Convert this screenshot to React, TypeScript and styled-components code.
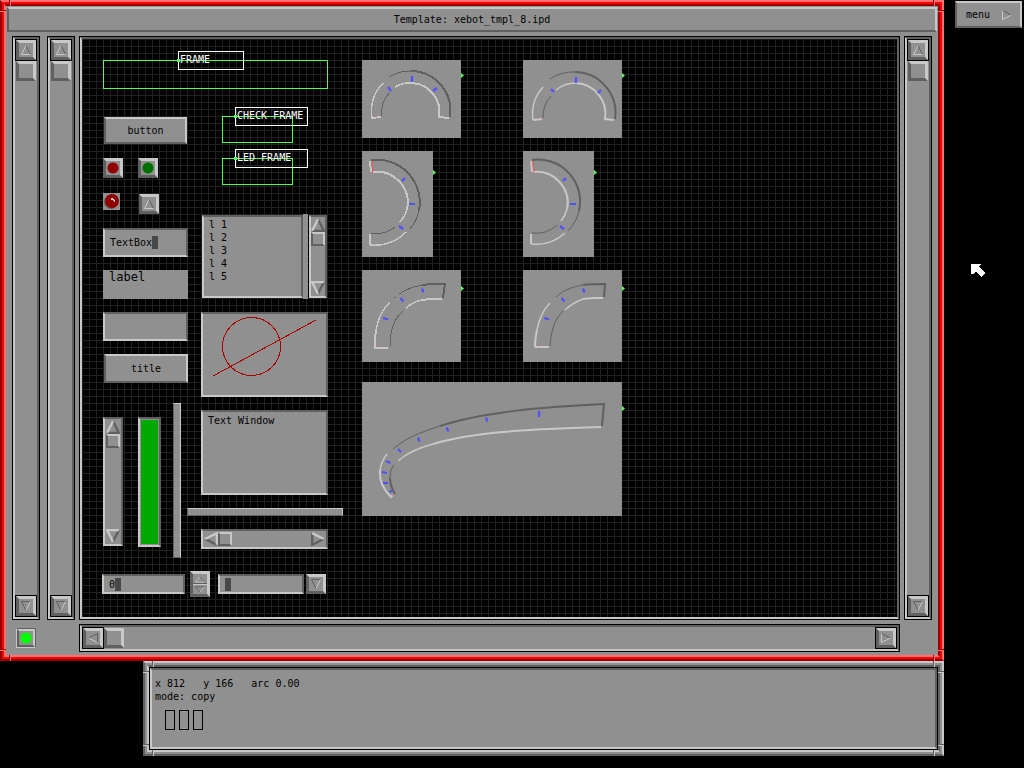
import React, { useState } from "react";
import styled, { createGlobalStyle, css } from "styled-components";

const C = {
  face: "#909090",
  light: "#c8c8c8",
  dark: "#606060",
  black: "#000000",
  green: "#55ff55",
  tick: "#5050ff",
};

const raised = css`
  border-style: solid;
  border-color: ${C.light} ${C.light} ${C.dark} ${C.dark};
`;
const sunken = css`
  border-style: solid;
  border-color: ${C.dark} ${C.dark} ${C.light} ${C.light};
`;

const Global = createGlobalStyle`
  *, *::before, *::after { box-sizing: border-box; }
  body { margin: 0; background: #000; }
  body, button, input, select, textarea {
    font: 10px/13px "DejaVu Sans Mono", "Liberation Mono", monospace;
    color: #000;
  }
`;

/* ---------- desktop and windows ---------- */

const Desktop = styled.main`
  position: relative;
  display: grid;
  grid-template-columns: 1fr 80px;
  min-height: 100vh;
  padding-bottom: 12px;
  background: #000;
`;

const Stack = styled.div`
  display: flex;
  flex-direction: column;
  min-width: 0;
`;

type Tone = { hi: string; mid: string; lo: string };
const RED: Tone = { hi: "#ff7070", mid: "#ff0000", lo: "#900000" };
const GREY: Tone = { hi: C.light, mid: C.face, lo: C.dark };

const Outer = styled.section<{ $tone: Tone; $grow?: boolean }>`
  position: relative;
  display: flex;
  flex: ${(p) => (p.$grow ? "1 0 auto" : "none")};
  margin-left: ${(p) => (p.$grow ? "0" : "143px")};
  border: 2px solid;
  border-color: ${(p) => `${p.$tone.hi} ${p.$tone.hi} ${p.$tone.lo} ${p.$tone.lo}`};
`;

const Middle = styled.div<{ $tone: Tone }>`
  display: flex;
  flex: 1;
  min-width: 0;
  border: 2px solid ${(p) => p.$tone.mid};
`;

const Inner = styled.div<{ $tone: Tone }>`
  display: flex;
  flex-direction: column;
  flex: 1;
  min-width: 0;
  border: 2px solid;
  border-color: ${(p) => `${p.$tone.lo} ${p.$tone.lo} ${p.$tone.hi} ${p.$tone.hi}`};
  background: ${C.face};
`;

const Joint = styled.i<{ $tone: Tone; $v: "top" | "bottom"; $h: "left" | "right" }>`
  position: absolute;
  ${(p) => p.$v}: -2px;
  ${(p) => p.$h}: -2px;
  width: 12px;
  height: 12px;
  pointer-events: none;
  &::before,
  &::after {
    content: "";
    position: absolute;
  }
  &::before {
    ${(p) => p.$v}: 0;
    ${(p) => p.$h}: 9px;
    width: 2px;
    height: 6px;
    background: linear-gradient(90deg, ${(p) => p.$tone.lo} 50%, ${(p) => p.$tone.hi} 50%);
  }
  &::after {
    ${(p) => p.$h}: 0;
    ${(p) => p.$v}: 10px;
    width: 6px;
    height: 2px;
    background: linear-gradient(${(p) => p.$tone.lo} 50%, ${(p) => p.$tone.hi} 50%);
  }
`;

function Window({ tone, grow, label, children }: { tone: Tone; grow?: boolean; label: string; children: React.ReactNode }) {
  return (
    <Outer $tone={tone} $grow={grow} aria-label={label}>
      <Middle $tone={tone}>
        <Inner $tone={tone}>{children}</Inner>
      </Middle>
      <Joint $tone={tone} $v="top" $h="left" />
      <Joint $tone={tone} $v="top" $h="right" />
      <Joint $tone={tone} $v="bottom" $h="left" />
      <Joint $tone={tone} $v="bottom" $h="right" />
    </Outer>
  );
}

const TitleBar = styled.h1`
  ${raised}
  border-width: 2px;
  margin: 1px 1px 0;
  height: 25px;
  font-size: 10px;
  font-weight: normal;
  line-height: 22px;
  text-align: center;
`;

const Editor = styled.div`
  display: grid;
  flex: 1;
  grid-template-columns: 31px 28px 1fr 28px;
  grid-template-rows: 1fr 28px;
  gap: 4px;
  padding: 4px 6px 3px;
`;

const Well = styled.div`
  display: flex;
  min-width: 0;
  border: 1px solid #000;
`;

const Canvas = styled.div`
  ${sunken}
  border-width: 2px;
  position: relative;
  flex: 1;
  min-height: 582px;
  overflow: hidden;
  background-color: #000;
  background-image: linear-gradient(#202020 1px, transparent 1px), linear-gradient(90deg, #202020 1px, transparent 1px);
  background-size: 7px 7px;
`;

/* ---------- arrows ---------- */

type Dir = "up" | "down" | "left" | "right";

const SHAPES: Record<Dir, [string, string]> = {
  up: ["M1 11 L6 1", "M6 1 L11 11 H1"],
  down: ["M11 1 H1 L6 11", "M6 11 L11 1"],
  left: ["M11 11 V1 L1 6", "M1 6 L11 11"],
  right: ["M1 1 L11 6", "M11 6 L1 11 V1"],
};
const ENGRAVED: Record<Dir, [string, string]> = {
  up: ["M6 1.5 L1.5 10.5 H10.5", "M6 1.5 L10.5 10.5"],
  down: ["M6 10.5 L10.5 1.5", "M10.5 1.5 H1.5 L6 10.5"],
  left: ["M1.5 6 L10.5 10.5", "M10.5 10.5 V1.5 L1.5 6"],
  right: ["M1.5 1.5 V10.5 L10.5 6", "M1.5 1.5 L10.5 6"],
};

const ArrowSvg = styled.svg`
  display: block;
  flex: none;
`;

function Arrow({ dir, w = 12, h = 12, engraved }: { dir: Dir; w?: number; h?: number; engraved?: boolean }) {
  const [hi, lo] = (engraved ? ENGRAVED : SHAPES)[dir];
  const sw = engraved ? 1 : 2;
  return (
    <ArrowSvg width={w} height={h} viewBox="0 0 12 12" preserveAspectRatio="none" fill="none" strokeWidth={sw} aria-hidden>
      <path d={lo} stroke={C.dark} />
      <path d={hi} stroke={C.light} />
    </ArrowSvg>
  );
}

/* ---------- controls ---------- */

const Push = styled.button<{ $edge?: number; $size?: number; $outlined?: boolean }>`
  ${raised}
  border-width: ${(p) => p.$edge ?? 3}px;
  display: flex;
  align-items: center;
  justify-content: center;
  flex: none;
  width: ${(p) => (p.$size ? `${p.$size}px` : "100%")};
  height: ${(p) => (p.$size ? `${p.$size}px` : "100%")};
  margin: ${(p) => (p.$outlined ? "1px" : "0")};
  padding: 0;
  background: ${C.face};
  outline: ${(p) => (p.$outlined ? "1px solid #000" : "none")};
`;

const Glyph = styled.button`
  display: block;
  flex: none;
  padding: 0;
  border: 0;
  background: none;
`;

const Track = styled.div<{ $row?: boolean }>`
  ${sunken}
  border-width: 2px;
  display: flex;
  flex: 1;
  flex-direction: ${(p) => (p.$row ? "row" : "column")};
  align-items: center;
  width: 100%;
  height: 100%;
  min-width: 0;
  background: ${C.face};
`;

const Spacer = styled.span`
  flex: 1;
`;

function EditorScroll({ row, label }: { row?: boolean; label: string }) {
  return (
    <Well>
      <Track $row={row} role="group" aria-label={label}>
        <Push $size={20} $outlined aria-label={row ? "Left" : "Up"}>
          <Arrow dir={row ? "left" : "up"} engraved />
        </Push>
        <Push $size={20} aria-label="Thumb" />
        <Spacer />
        <Push $size={20} $outlined aria-label={row ? "Right" : "Down"}>
          <Arrow dir={row ? "right" : "down"} engraved />
        </Push>
      </Track>
    </Well>
  );
}

const SmallTrack = styled(Track)`
  padding: ${(p) => (p.$row ? "0 1px" : "1px 0")};
`;

function SmallScroll({ row, label }: { row?: boolean; label: string }) {
  return (
    <SmallTrack $row={row} role="group" aria-label={label}>
      <Glyph aria-label={row ? "Left" : "Up"}>
        <Arrow dir={row ? "left" : "up"} w={14} h={14} />
      </Glyph>
      <Push $size={14} $edge={2} aria-label="Thumb" />
      <Spacer />
      <Glyph aria-label={row ? "Right" : "Down"}>
        <Arrow dir={row ? "right" : "down"} w={14} h={14} />
      </Glyph>
    </SmallTrack>
  );
}

const Lamp = styled.input<{ $color: string; $edge?: number }>`
  ${raised}
  appearance: none;
  display: block;
  width: 100%;
  height: 100%;
  margin: 0;
  border-width: ${(p) => p.$edge ?? 3}px;
  background: radial-gradient(circle at center, ${(p) => p.$color} 5px, ${C.face} 6px);
`;

const StatusLamp = styled.div`
  ${sunken}
  border-width: 1px;
  width: 20px;
  height: 20px;
  margin-left: 4px;
  align-self: center;
`;

/* Items that the user drops on the template canvas, in canvas coordinates. */
const Item = styled.div<{ $x: number; $y: number; $w: number; $h: number }>`
  position: absolute;
  left: ${(p) => p.$x}px;
  top: ${(p) => p.$y}px;
  width: ${(p) => p.$w}px;
  height: ${(p) => p.$h}px;
`;

const FrameBox = styled(Item)`
  border: 1px solid ${C.green};
`;

const FrameLabel = styled(Item)`
  border: 1px solid #fff;
  padding: 1px;
  color: #fff;
  white-space: nowrap;
  &::before {
    content: "";
    position: absolute;
    left: -2px;
    top: 7px;
    width: 3px;
    height: 3px;
    background: ${C.green};
  }
`;

const SunkItem = styled(Item)`
  ${sunken}
  border-width: 2px;
  background: ${C.face};
`;

const PlainLabel = styled(Item)`
  padding: 0 6px;
  background: ${C.face};
  font-size: 12px;
  line-height: 14px;
`;

const Bar = styled(Item)`
  ${raised}
  border-width: 1px;
  background: ${C.face};
`;

const Input = styled.input`
  display: block;
  width: 100%;
  height: 100%;
  padding: 0 5px;
  border: 0;
  outline: 0;
  background: transparent;
  caret-color: transparent;
`;

const Block = styled.span<{ $col: number }>`
  position: absolute;
  left: calc(5px + ${(p) => p.$col}ch);
  top: 0;
  bottom: 0;
  width: 6px;
  height: 13px;
  margin: auto 0;
  background: #484848;
`;

function Field({ x, y, w, h, initial, label, cursor }: { x: number; y: number; w: number; h: number; initial: string; label: string; cursor?: boolean }) {
  const [value, setValue] = useState(initial);
  return (
    <SunkItem $x={x} $y={y} $w={w} $h={h}>
      <Input aria-label={label} value={value} onChange={(e) => setValue(e.target.value)} />
      {cursor && <Block $col={value.length} />}
    </SunkItem>
  );
}

const List = styled.select`
  appearance: none;
  display: block;
  width: 100%;
  height: 100%;
  padding: 2px 5px;
  border: 0;
  outline: 0;
  background: transparent;
  overflow: hidden;
  option {
    height: 13px;
    min-height: 13px;
    padding: 0;
    line-height: 13px;
    color: #000;
  }
`;

const TextArea = styled.textarea`
  display: block;
  width: 100%;
  height: 100%;
  padding: 2px 5px;
  border: 0;
  outline: 0;
  resize: none;
  background: transparent;
`;

const Level = styled.div`
  height: 100%;
  border: 1px solid ${C.face};
  background: #00a800;
`;

const Spinner = styled(Item)`
  ${raised}
  border-width: 3px;
  display: flex;
  flex-direction: column;
  align-items: center;
  justify-content: space-around;
  background: linear-gradient(${C.face} 9px, ${C.dark} 9px, ${C.dark} 10px, ${C.light} 10px, ${C.light} 11px, ${C.face} 11px);
`;

/* ---------- dials ---------- */

type Dial = {
  x: number;
  y: number;
  w: number;
  h: number;
  handle: number;
  smooth?: boolean;
  dark: string;
  darkBold: string;
  light: string;
  lightBold: string;
  ticks: string;
  zero: string;
};

const QUARTER_TICKS = "M21 48 L26 49.5 M38.5 28 L41.5 31.5 M60 18.5 L61.5 22.5";

const DIALS: Dial[] = [
  {
    x: 280, y: 21, w: 99, h: 78, handle: 15,
    dark: "M27 17 A40 40 0 0 1 49 11 M20 56 A29 29 0 0 1 27 33",
    darkBold: "M49 11 A40 40 0 0 1 88 57",
    light: "M10 58 A40 40 0 0 1 21 23 M33 27 A29 29 0 0 1 50 23",
    lightBold: "M9 58 L19 57 M50 23 A29 29 0 0 1 77 57 L87 58",
    ticks: "M50 16 V22 M26 27 L29 31 M71 31 L75 28",
    zero: "M14 56 h1",
  },
  {
    x: 441, y: 21, w: 99, h: 78, handle: 15, smooth: true,
    dark: "M27 19 A41 41 0 0 1 52 12 M20 58 A31 31 0 0 1 28 36",
    darkBold: "M52 12 A41 41 0 0 1 92 59",
    light: "M10 60 A41 41 0 0 1 20 27 M33 30 A31 31 0 0 1 53 23",
    lightBold: "M10 60 L19 59 M53 23 A31 31 0 0 1 82 59 L91 60",
    ticks: "M53 17 V23 M28 29 L31 32 M75 33 L78 30",
    zero: "M15 58 h1",
  },
  {
    x: 280, y: 112, w: 71, h: 106, handle: 21,
    dark: "M57 60 A43 43 0 0 1 48 78 M9 82 A31 31 0 0 0 33 76",
    darkBold: "M9 9 A43 43 0 0 1 57 60",
    light: "M44 81 A43 43 0 0 1 8 94 M45 58 A31 31 0 0 1 38 71",
    lightBold: "M8 94 V83 M8 10 L9 21 M10 21 A31 31 0 0 1 45 58",
    ticks: "M40 30 L43 27 M47 53 H53 M37 75 L41 78",
    zero: "M10 10 V22",
  },
  {
    x: 441, y: 112, w: 71, h: 106, handle: 21, smooth: true,
    dark: "M56 60 A42 42 0 0 1 45 80 M9 82 A31 31 0 0 0 34 74",
    darkBold: "M9 9 A42 42 0 0 1 56 60",
    light: "M42 82 A43 43 0 0 1 8 93 M44 58 A31 31 0 0 1 38 70",
    lightBold: "M8 93 V83 M8 10 L9 21 M10 21 A31 31 0 0 1 44 58",
    ticks: "M40 30 L43 27 M47 53 H53 M37 75 L41 78",
    zero: "M10 10 L11 22",
  },
  {
    x: 280, y: 231, w: 99, h: 92, handle: 18,
    dark: "M32 28 L34 27 M37 24 C43 20 50 17 60 15 M28 76 C28 60 33 48 41 41",
    darkBold: "M60 15 C66 14 74 14 83 14 L81 28",
    light: "M14 60 C16 49 20 40 27 33 M44 38 C50 33 55 31 60 30",
    lightBold: "M13 78 C13 70 13 65 14 60 M12 78 H26 M80 29 H68 L60 30",
    ticks: QUARTER_TICKS,
    zero: "M15 76 h1",
  },
  {
    x: 441, y: 231, w: 99, h: 92, handle: 18, smooth: true,
    dark: "M33 27 C42 19 50 17 60 15 M27 76 C28 60 32 49 40 41",
    darkBold: "M60 15 C66 14 74 14 82 14 L81 27",
    light: "M14 60 C16 49 20 40 27 33 M42 40 C49 33 55 31 60 29",
    lightBold: "M12 77 C12 70 13 65 14 60 M12 77 H26 M80 28 H70 L60 29",
    ticks: QUARTER_TICKS,
    zero: "M15 76 h1",
  },
  {
    x: 280, y: 343, w: 260, h: 134, handle: 26, smooth: true,
    dark: "M31 67 C45 55 60 50 78 44 M28 96 C28 90 29 87 32 83",
    darkBold: "M78 44 C120 30 180 25 242 22 L240 44 M28 96 C28 102 30 107 33 112",
    light: "M25 72 C21 77 19 82 18 88 M36 79 C46 70 60 65 71 62",
    lightBold: "M18 88 C17 98 20 106 29 115 L31 113 M71 62 C110 50 170 47 239 45",
    ticks:
      "M177 29 V35 M124 35.5 L125.5 39.5 M84.5 45.5 L86.5 49.5 M56 55.5 L57.5 59.5 M36 67 L39 70 M24 79 L28.5 81 M20 90 L25 91 M21 101 H26 M27.5 110 L30 108.5",
    zero: "M30 113 h1",
  },
];

const DialPanel = styled(Item)`
  background: ${C.face};
`;

const Handle = styled(Item)`
  background: ${C.green};
  clip-path: polygon(0 0, 100% 50%, 0 100%);
`;

function DialView({ d }: { d: Dial }) {
  return (
    <>
      <DialPanel $x={d.x} $y={d.y} $w={d.w} $h={d.h}>
        <svg width={d.w} height={d.h} fill="none" display="block" shapeRendering={d.smooth ? "auto" : "crispEdges"} aria-hidden>
          <g stroke={C.dark}>
            <path d={d.dark} strokeWidth="1" />
            <path d={d.darkBold} strokeWidth="2" />
          </g>
          <g stroke={C.light}>
            <path d={d.light} strokeWidth="1.5" />
            <path d={d.lightBold} strokeWidth="2" />
          </g>
          <path d={d.zero} stroke="#ff5050" />
          <path d={d.ticks} stroke={C.tick} strokeWidth="2.2" shapeRendering="auto" />
        </svg>
      </DialPanel>
      <Handle $x={d.x + d.w} $y={d.y + d.handle - 2} $w={3} $h={5} />
    </>
  );
}

/* ---------- status, menu, pointer ---------- */

const StatusPanel = styled.div`
  ${sunken}
  border-width: 2px;
  flex: 1;
  min-height: 81px;
  padding: 7px 3px 17px;
  outline: 1px solid #000;
  margin: 1px;
`;

const StatusLine = styled.p`
  margin: 0;
  white-space: pre;
`;

const Slots = styled.div`
  display: flex;
  gap: 4px;
  margin: 7px 0 0 10px;
`;

const Slot = styled.span`
  width: 10px;
  height: 20px;
  border: 1px solid #000;
`;

const MenuArea = styled.nav`
  padding: 1px 2px 0 11px;
`;

const MenuButton = styled.button`
  ${raised}
  border-width: 2px;
  display: flex;
  align-items: center;
  justify-content: space-between;
  width: 100%;
  height: 27px;
  padding: 0 7px 0 9px;
  background: ${C.face};
`;

const Pointer = styled.svg`
  position: absolute;
  left: 971px;
  top: 264px;
`;

const SideWell = styled.div`
  display: flex;
  width: 28px;
  > * {
    flex: 1;
  }
`;

const WideCell = styled.div`
  grid-column: 3;
  display: flex;
  min-width: 0;
  > * {
    flex: 1;
  }
`;

function EditorBody() {
  return (
    <Editor>
      <SideWell>
        <EditorScroll label="Outer scroll" />
      </SideWell>
      <SideWell>
        <EditorScroll label="Inner scroll" />
      </SideWell>
      <Well>
        <Canvas>
          <FrameBox $x={21} $y={21} $w={225} $h={29} />
          <FrameLabel $x={96} $y={12} $w={66} $h={19}>FRAME</FrameLabel>
          <FrameBox $x={140} $y={77} $w={71} $h={27} />
          <FrameLabel $x={153} $y={68} $w={73} $h={19}>CHECK FRAME</FrameLabel>
          <FrameBox $x={140} $y={119} $w={71} $h={27} />
          <FrameLabel $x={153} $y={110} $w={73} $h={19}>LED FRAME</FrameLabel>

          <Item $x={22} $y={78} $w={83} $h={27}>
            <Push $edge={2}>button</Push>
          </Item>
          <Item $x={21} $y={119} $w={20} $h={20}>
            <Lamp type="checkbox" aria-label="Red check" $color="#900000" />
          </Item>
          <Item $x={56} $y={119} $w={20} $h={20}>
            <Lamp type="checkbox" aria-label="Green check" $color="#007000" />
          </Item>
          <DialPanel $x={21} $y={154} $w={17} $h={17}>
            <svg width="17" height="17" display="block" aria-hidden>
              <circle cx="8" cy="9" r="7" fill={C.dark} />
              <circle cx="9" cy="8" r="7" fill="#900000" />
              <path d="M8 5 h2 v1 h1 v1 h1 v2 h-1 v-1 h-1 v-1 h-2 z" fill={C.light} />
              <rect x="10" y="6" width="1" height="1" fill="#fff" />
            </svg>
          </DialPanel>
          <Item $x={57} $y={155} $w={20} $h={20}>
            <Push aria-label="Up">
              <Arrow dir="up" engraved />
            </Push>
          </Item>

          <Field x={21} y={189} w={85} h={29} initial="TextBox" label="Text box" cursor />
          <PlainLabel $x={21} $y={231} $w={85} $h={29}>label</PlainLabel>
          <SunkItem $x={21} $y={273} $w={85} $h={29} />
          <Item $x={22} $y={315} $w={84} $h={29}>
            <Push $edge={2}>title</Push>
          </Item>

          <SunkItem $x={120} $y={176} $w={101} $h={83}>
            <List size={5} aria-label="List">
              <option>l 1</option>
              <option>l 2</option>
              <option>l 3</option>
              <option>l 4</option>
              <option>l 5</option>
            </List>
          </SunkItem>
          <DialPanel $x={221} $y={175} $w={5} $h={85} />
          <Item $x={227} $y={176} $w={18} $h={83}>
            <SmallScroll label="List scroll" />
          </Item>

          <SunkItem $x={119} $y={273} $w={127} $h={85}>
            <svg width="123" height="81" display="block" fill="none" stroke="#a80000" shapeRendering="crispEdges" aria-hidden>
              <circle cx="48.5" cy="32.5" r="29" />
              <path d="M10 62 L113 6" />
            </svg>
          </SunkItem>
          <SunkItem $x={119} $y={371} $w={127} $h={85}>
            <TextArea aria-label="Text window" defaultValue="Text Window" />
          </SunkItem>

          <Item $x={21} $y={378} $w={20} $h={129}>
            <SmallScroll label="Vertical scroll" />
          </Item>
          <SunkItem $x={56} $y={378} $w={23} $h={130} role="meter" aria-label="Level" aria-valuenow={100}>
            <Level />
          </SunkItem>
          <Bar $x={91} $y={364} $w={8} $h={155} />
          <Bar $x={105} $y={469} $w={156} $h={8} />
          <Item $x={119} $y={490} $w={127} $h={20}>
            <SmallScroll row label="Horizontal scroll" />
          </Item>

          <Field x={20} y={535} w={83} h={20} initial="0" label="Number" cursor />
          <Spinner $x={108} $y={532} $w={20} $h={26}>
            <Glyph aria-label="Increase">
              <Arrow dir="up" w={12} h={7} engraved />
            </Glyph>
            <Glyph aria-label="Decrease">
              <Arrow dir="down" w={12} h={7} engraved />
            </Glyph>
          </Spinner>
          <Field x={136} y={535} w={86} h={20} initial="" label="Choice" cursor />
          <Item $x={224} $y={535} $w={20} $h={20}>
            <Push aria-label="Open choices">
              <Arrow dir="down" engraved />
            </Push>
          </Item>

          {DIALS.map((d) => (
            <DialView key={`${d.x}-${d.y}`} d={d} />
          ))}
        </Canvas>
      </Well>
      <SideWell>
        <EditorScroll label="Canvas vertical scroll" />
      </SideWell>

      <StatusLamp>
        <Lamp type="checkbox" defaultChecked aria-label="Active" $color="#00ff00" $edge={2} />
      </StatusLamp>
      <WideCell>
        <EditorScroll row label="Canvas horizontal scroll" />
      </WideCell>
    </Editor>
  );
}

export default function App() {
  return (
    <>
      <Global />
      <Desktop>
        <Stack>
          <Window tone={RED} grow label="Template editor">
            <TitleBar>Template: xebot_tmpl_8.ipd</TitleBar>
            <EditorBody />
          </Window>
          <Window tone={GREY} label="Status">
            <StatusPanel>
              <StatusLine>{"x 812   y 166   arc 0.00"}</StatusLine>
              <StatusLine>mode: copy</StatusLine>
              <Slots>
                <Slot />
                <Slot />
                <Slot />
              </Slots>
            </StatusPanel>
          </Window>
        </Stack>
        <MenuArea>
          <MenuButton>
            <span>menu</span>
            <Arrow dir="right" engraved />
          </MenuButton>
        </MenuArea>
        <Pointer width="15" height="14" viewBox="0 0 15 14" fill="#fff" shapeRendering="crispEdges" aria-hidden>
          <path d="M0 0 H10 L8 3 L14 9 L10 13 L5 8 L2 10 H0 Z" />
        </Pointer>
      </Desktop>
    </>
  );
}
